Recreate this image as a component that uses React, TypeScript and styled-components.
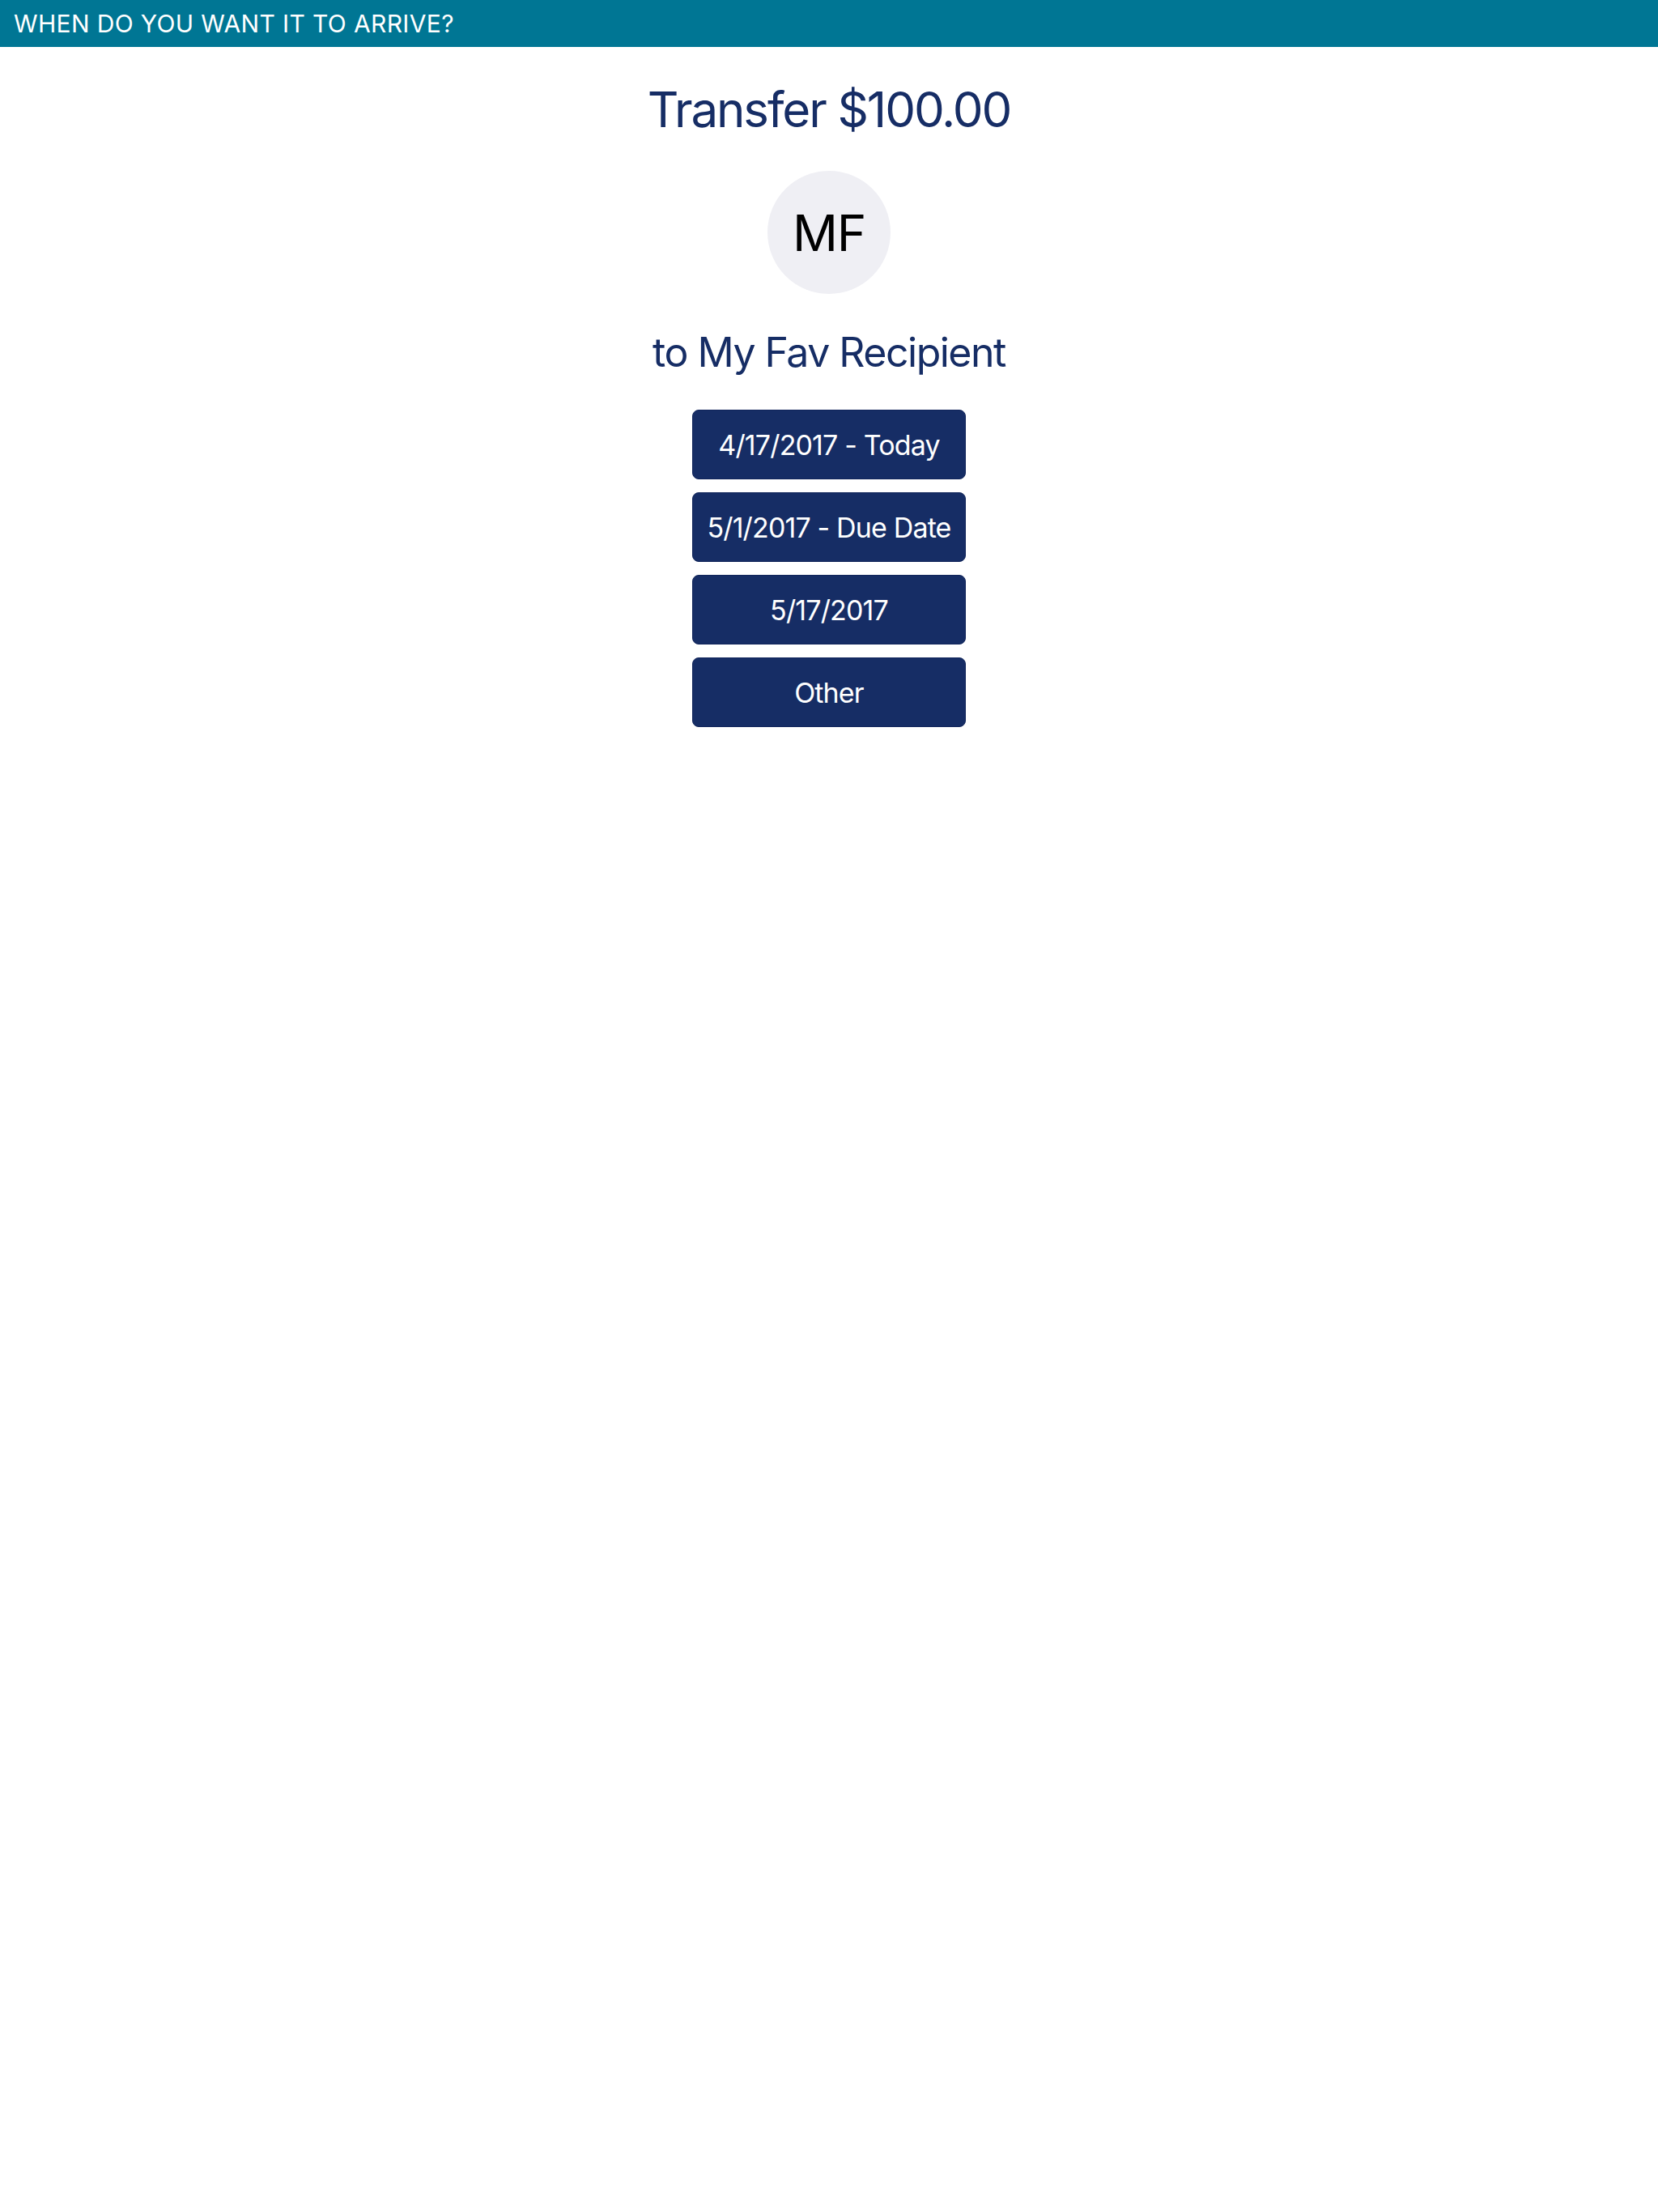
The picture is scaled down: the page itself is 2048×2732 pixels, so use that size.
import React from "react";
import styled, { createGlobalStyle } from "styled-components";

const Global = createGlobalStyle`
  html, body { margin: 0; padding: 0; background: #ffffff; }
  body { font-family: Inter, "Noto Sans", sans-serif; }
`;

const Page = styled.div`
  display: flex;
  flex-direction: column;
  min-height: 2732px;
  background: #ffffff;
`;

const Header = styled.header`
  height: 58px;
  background: #007694;
  display: flex;
  align-items: center;
  padding: 0 17px;
  color: #ffffff;
  font-family: Inter, "Liberation Sans", sans-serif;
  font-size: 30px;
  font-weight: 400;
  letter-spacing: 0.012em;
`;

const Content = styled.main`
  display: flex;
  flex-direction: column;
  align-items: center;
  padding-top: 41px;
`;

const Title = styled.h1`
  margin: 0;
  font-family: Inter, sans-serif;
  font-weight: 400;
  font-size: 60px;
  line-height: 72px;
  letter-spacing: -0.035em;
  color: #162d65;
`;

const Avatar = styled.div`
  margin-top: 40px;
  width: 152px;
  height: 152px;
  border-radius: 50%;
  background: #efeff4;
  display: flex;
  align-items: center;
  justify-content: center;
  font-family: Inter, sans-serif;
  font-size: 62px;
  letter-spacing: -0.02em;
  color: #000000;
`;

const Subtitle = styled.h2`
  margin: 42px 0 0;
  font-family: Inter, sans-serif;
  font-weight: 400;
  font-size: 50px;
  line-height: 60px;
  letter-spacing: -0.03em;
  color: #162d65;
`;

const Options = styled.div`
  margin-top: 41px;
  display: flex;
  flex-direction: column;
  gap: 16px;
`;

const Option = styled.button`
  width: 338px;
  height: 86px;
  border: 1px solid #10245a;
  border-radius: 8px;
  background: #162d65;
  color: #ffffff;
  font-family: Inter, sans-serif;
  font-size: 34px;
  font-weight: 400;
  letter-spacing: -0.025em;
  display: flex;
  align-items: center;
  justify-content: center;
  padding: 0;
  cursor: pointer;
`;

const options = ["4/17/2017 - Today", "5/1/2017 - Due Date", "5/17/2017", "Other"];

export default function App() {
  return (
    <Page>
      <Global />
      <Header>WHEN DO YOU WANT IT TO ARRIVE?</Header>
      <Content>
        <Title>Transfer $100.00</Title>
        <Avatar>MF</Avatar>
        <Subtitle>to My Fav Recipient</Subtitle>
        <Options>
          {options.map((o) => (
            <Option key={o}>{o}</Option>
          ))}
        </Options>
      </Content>
    </Page>
  );
}
